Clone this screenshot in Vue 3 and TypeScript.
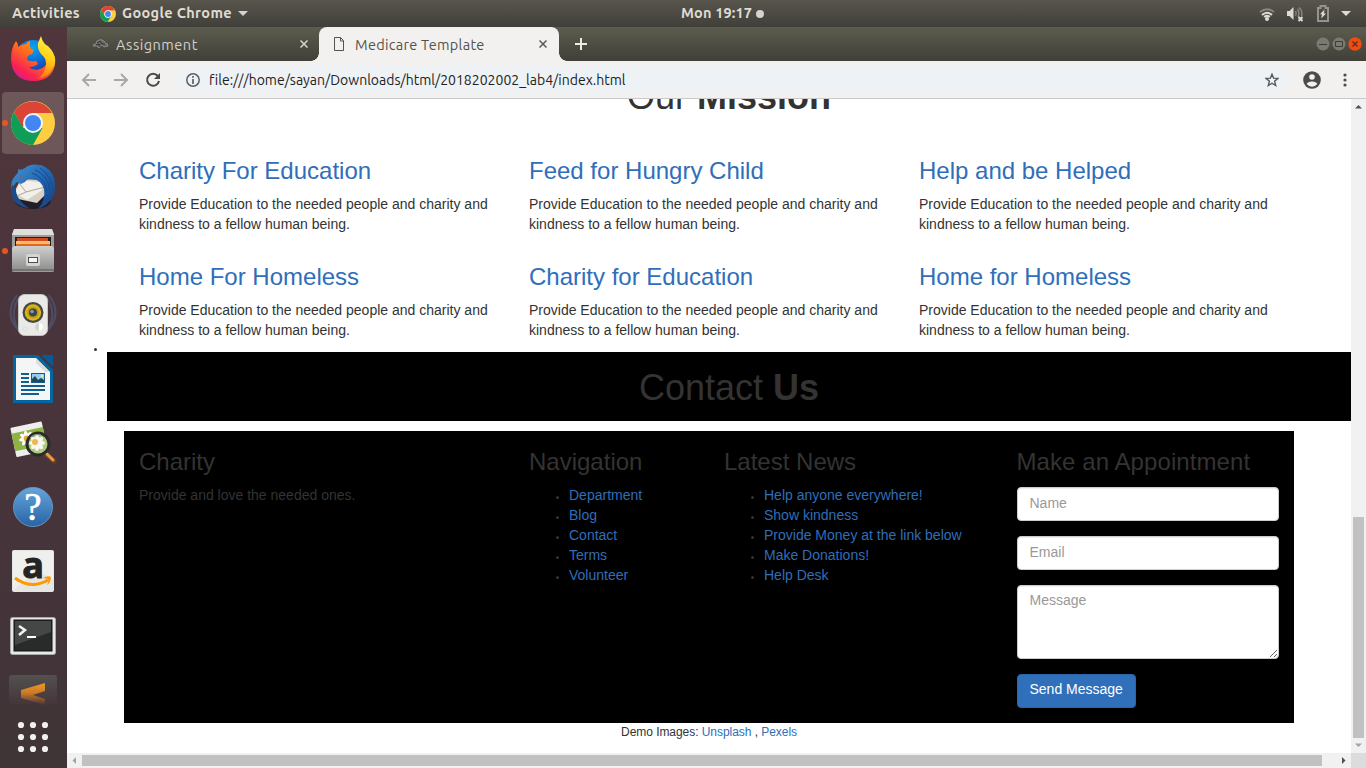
<script setup lang="ts">
interface Mission { title: string }
const missions: Mission[] = [
  { title: 'Charity For Education' },
  { title: 'Feed for Hungry Child' },
  { title: 'Help and be Helped' },
  { title: 'Home For Homeless' },
  { title: 'Charity for Education' },
  { title: 'Home for Homeless' },
]
const navigation: string[] = ['Department', 'Blog', 'Contact', 'Terms', 'Volunteer']
const news: string[] = [
  'Help anyone everywhere!',
  'Show kindness',
  'Provide Money at the link below',
  'Make Donations!',
  'Help Desk',
]
const dots: number[] = [5, 17, 29]
</script>

<template>
  <div class="desktop">
    <header class="topbar">
      <span class="activities">Activities</span>
      <svg class="mini-chrome" width="16" height="16" viewBox="0 0 44 44">
        <circle cx="22" cy="22" r="22" fill="#fc4" />
        <path d="M3 11A22 22 0 0 1 41 11.5L22 12.5A10 10 0 0 0 13.5 27Z" fill="#db4437" />
        <path d="M3 11A22 22 0 0 0 21 44L31 27L22 32A10 10 0 0 1 13 27Z" fill="#0f9d58" />
        <circle cx="22" cy="22" r="10" fill="#fff" /><circle cx="22" cy="22" r="8" fill="#4285f4" />
      </svg>
      <span class="appname">Google Chrome</span>
      <svg class="caret" width="10" height="5"><path d="M0 0H10L5 5Z" fill="#d5d3cf" /></svg>
      <span class="clock">Mon 19:17</span>
      <span class="notice"></span>
      <div class="tray">
        <svg width="16" height="16" viewBox="0 0 16 16" fill="none" stroke-width="2">
          <path d="M1 6Q8 .5 15 6" stroke="#888680" /><path d="M3 9Q8 4.5 13 9" stroke="#dfdbd2" />
          <path d="M5.2 11Q8 8.7 10.8 11" stroke="#dfdbd2" /><circle cx="8" cy="13" r="2" fill="#dfdbd2" />
        </svg>
        <svg class="volume" width="18" height="16" viewBox="0 0 18 16">
          <path d="M1 5H3.5L7.5 1V14L3.5 10H1Z" fill="#dfdbd2" />
          <path d="M9.5 5Q11 7.5 9.5 10M11.5 3Q14 7 12 11M13 1.5Q17 5 15.5 10" fill="none" stroke="#888680" stroke-width="1.5" />
          <path d="M12.5 11L16.5 15M16.5 11L12.5 15" stroke="#dfdbd2" stroke-width="2" />
        </svg>
        <svg class="battery" width="12" height="17" viewBox="0 0 12 17">
          <path d="M3.5 1H8.5V3H11V16H1V3H3.5Z" fill="none" stroke="#95938c" stroke-width="2" />
          <path d="M7.5 4.5L3 9.3H5L4.2 13.5L9 8.5H7Z" fill="#dfdbd2" />
        </svg>
        <svg width="10" height="5"><path d="M0 0H10L5 5Z" fill="#dfdbd2" /></svg>
      </div>
    </header>

    <div class="work">
      <aside class="dock">
        <div class="tile">
          <svg width="48" height="48" viewBox="0 0 48 48">
            <defs>
              <radialGradient id="fxBlue" cx=".5" cy=".2" r=".8"><stop offset="0" stop-color="#08a6ef" /><stop offset=".6" stop-color="#1458c8" /><stop offset="1" stop-color="#321a78" /></radialGradient>
              <linearGradient id="fxRed" x1=".8" y1="0" x2=".1" y2=".9"><stop offset="0" stop-color="#ffad12" /><stop offset=".45" stop-color="#ff6920" /><stop offset=".8" stop-color="#f92253" /><stop offset="1" stop-color="#e01595" /></linearGradient>
              <linearGradient id="fxYellow" x1=".6" y1="0" x2=".4" y2="1"><stop offset="0" stop-color="#fff34d" /><stop offset=".5" stop-color="#ffd017" /><stop offset="1" stop-color="#ff7418" /></linearGradient>
            </defs>
            <circle cx="24" cy="24" r="19" fill="url(#fxBlue)" />
            <path d="M7 6Q9 8 9 12Q13 9 17 9Q19 6 21 6Q20 10 22 14L25 15L23 19Q18 20 18 24Q19 27 27 26L29 29Q24 33 19 32Q28 38 36 31Q43 23 38 13Q48 20 46 30Q42 46 25 46Q3 46 2 24Q2 13 7 6Z" fill="url(#fxRed)" />
            <path d="M32 1Q34 9 39 11Q49 21 45 31Q40 42 29 44Q37 37 37 29Q37 23 33 20Q28 15 29 8Z" fill="url(#fxYellow)" />
          </svg>
        </div>
        <div class="tile active running">
          <svg width="48" height="48" viewBox="0 0 48 48">
            <circle cx="24" cy="24" r="22" fill="#ffcd42" />
            <path d="M5 13A22 22 0 0 1 43 14H24L13.5 28Z" fill="#db4437" />
            <path d="M5 13A22 22 0 0 0 24 46L33.5 29H24L14.5 29Z" fill="#0f9d58" />
            <circle cx="24" cy="24" r="10" fill="#f5f5f5" /><circle cx="24" cy="24" r="8" fill="#4285f4" />
          </svg>
        </div>
        <div class="tile">
          <svg width="48" height="48" viewBox="0 0 48 48">
            <defs><linearGradient id="bird" x1="0" y1="0" x2="1" y2="1"><stop offset="0" stop-color="#4594d0" /><stop offset=".5" stop-color="#2267b2" /><stop offset="1" stop-color="#143b7d" /></linearGradient></defs>
            <ellipse cx="24" cy="38" rx="18" ry="8" fill="#211d2a" />
            <path d="M4 31L12 16L36 17L37 31L28 40L9 36Z" fill="#d6d0c7" />
            <path d="M6 30L12 17L36 20L32 28L18 37Z" fill="#f3f0ea" /><path d="M10 20L17 29L36 24M17 29L8 33" fill="none" stroke="#aaa69f" />
            <path d="M9 6Q12 8 16 5Q21 0 31 2Q34 2 36 4Q46 9 46 22Q47 39 29 46Q37 37 35 26Q32 17 24 16Q19 15 16 19L12 21L8 19Q4 22 3 29Q0 18 7 12Q10 9 9 6Z" fill="url(#bird)" />
            <path d="M3 22Q0 36 10 42Q14 45 20 45Q6 36 7 25Z" fill="#1d4c88" />
            <path d="M23 10Q35 14 38 28M26 7Q38 11 41 27M31 5Q42 12 44 28M38 32Q37 38 34 42" fill="none" stroke="#174c91" />
            <circle cx="12" cy="13" r="1" fill="#c44732" />
          </svg>
        </div>
        <div class="tile running">
          <svg width="48" height="48" viewBox="0 0 48 48">
            <defs><linearGradient id="metal" x2="0" y2="1"><stop stop-color="#cfcfcd" /><stop offset="1" stop-color="#929292" /></linearGradient></defs>
            <path d="M5 2H43L45 7V44Q45 45 43 45H5Q3 45 3 44V7Z" fill="#9c9c99" /><path d="M5 2H43L45 8H3Z" fill="#dededc" />
            <path d="M6 10H42V19H6Z" fill="#241e1b" /><path d="M8 11H39V14H8Z" fill="#d4491f" /><path d="M7 14H41V17H7Z" fill="#ffba67" /><path d="M7 17H41V19H7Z" fill="#df6720" />
            <path d="M5 19H43L45 21V42H3V21Z" fill="url(#metal)" /><path d="M3 42H45V44H3Z" fill="#757573" />
            <rect x="17" y="27" width="14" height="12" rx="2" fill="#d4d4d2" /><rect x="19.5" y="30.5" width="9" height="5" fill="#f7f7f5" stroke="#4f4f4e" />
          </svg>
        </div>
        <div class="tile">
          <svg width="48" height="48" viewBox="0 0 48 48">
            <path d="M8 4Q-5 22 8 38M11 5Q-1 22 10 40M40 4Q53 22 40 38M37 5Q49 22 38 40" fill="none" stroke="#505574" stroke-opacity=".75" stroke-width="2" />
            <rect x="9.5" y="3.5" width="29" height="41" rx="6" fill="#e9e9e7" stroke="#c3c3bf" />
            <circle cx="24" cy="21.5" r="10.5" fill="#474843" /><circle cx="24" cy="21.5" r="8.2" fill="#dbb718" /><circle cx="24" cy="21.5" r="6" fill="#c19c17" /><circle cx="24" cy="21.5" r="4" fill="#38474d" /><circle cx="23" cy="20.5" r="1.8" fill="#8a9ba5" />
            <circle cx="30" cy="36" r="4" fill="#d4d4d1" /><path d="M30 32A4 4 0 0 1 30 40Z" fill="#fff" /><circle cx="16" cy="38" r="2" fill="none" stroke="#ddd" />
          </svg>
        </div>
        <div class="tile">
          <svg width="48" height="48" viewBox="0 0 48 48">
            <path d="M4 0H29L44 15V48H4Z" fill="#0366a1" /><path d="M32 0H44V12Z" fill="#065b96" /><path d="M7 3H27L41 17V45H7Z" fill="#f4f5f5" /><path d="M27 3V8L36 17H41Z" fill="#ddd" />
            <path d="M12 19H20M12 23H20M12 27H20M12 31H36M12 35H36M12 39H30" stroke="#125e8f" stroke-width="2" /><rect x="22" y="18" width="14" height="10" fill="#155d8c" /><rect x="23" y="19" width="12" height="8" fill="#8dcff1" /><circle cx="33" cy="21" r="1.3" fill="#fff170" /><path d="M23 27V24L26 21L29 25L32 23L35 25V27Z" fill="#264655" />
          </svg>
        </div>
        <div class="tile">
          <svg width="48" height="48" viewBox="0 0 48 48">
            <g transform="rotate(-12 21 20)"><rect x="4" y="5" width="32" height="30" rx="1" fill="#eeeeec" /><rect x="4" y="11" width="32" height="18" fill="#8eb344" />
              <g fill="#fff"><ellipse cx="18" cy="19" rx="2.5" ry="8" /><ellipse cx="18" cy="19" rx="8" ry="2.5" /><ellipse cx="18" cy="19" rx="2.5" ry="8" transform="rotate(45 18 19)" /><ellipse cx="18" cy="19" rx="2.5" ry="8" transform="rotate(-45 18 19)" /></g>
              <circle cx="18" cy="19" r="3.2" fill="#eda62b" />
            </g>
            <path d="M37 35L45 42" stroke="#694026" stroke-width="5" stroke-linecap="round" /><path d="M38 35L44 41" stroke="#e79b45" stroke-width="3" stroke-linecap="round" />
            <circle cx="29" cy="25" r="11" fill="#b1c981" stroke="#292c29" stroke-width="3" />
            <g fill="#f7f7f1"><ellipse cx="28" cy="24" rx="3" ry="8" /><ellipse cx="28" cy="24" rx="8" ry="3" /><ellipse cx="28" cy="24" rx="3" ry="8" transform="rotate(45 28 24)" /><ellipse cx="28" cy="24" rx="3" ry="8" transform="rotate(-45 28 24)" /></g>
            <circle cx="26" cy="23" r="3" fill="#efb64b" /><path d="M21 19Q25 14 32 16" stroke="#8e998c" stroke-width="1" fill="none" />
          </svg>
        </div>
        <div class="tile">
          <svg width="48" height="48" viewBox="0 0 48 48"><defs><linearGradient id="help" x2="0" y2="1"><stop stop-color="#65a5dc" /><stop offset="1" stop-color="#2863a4" /></linearGradient></defs><circle cx="24" cy="24" r="19.5" fill="url(#help)" stroke="#6993bb" /><text x="24" y="36.5" text-anchor="middle" class="question">?</text></svg>
        </div>
        <div class="tile">
          <svg class="amazon" width="48" height="48" viewBox="0 0 48 48"><rect x="3" y="3" width="42" height="42" rx="2" fill="#e5e5e4" /><path d="M4 4H44V33Q30 18 4 44Z" fill="#f5f5f4" opacity=".6" /><text x="24" y="30.5" text-anchor="middle" class="letter">a</text><path d="M6 31Q22 43 39 33" fill="none" stroke="#ff9900" stroke-width="3" /><path d="M34 31Q39 28 42 30Q42 35 38 38Q40 34 39 32Z" fill="#ff9900" /></svg>
        </div>
        <div class="tile">
          <svg class="terminal" width="48" height="48" viewBox="0 0 48 48"><rect x="1.5" y="5.5" width="45" height="37" rx="2" fill="#e7e7e5" stroke="#aaa" /><rect x="5" y="8" width="38" height="31" fill="#292a2a" stroke="#111" /><path d="M6 9H42V20L6 33Z" fill="#454646" /><path d="M10 14L16 18L10 23" fill="none" stroke="#f3f3f3" stroke-width="2.5" /><path d="M18 25H27" stroke="#fff" stroke-width="2" /></svg>
        </div>
        <div class="cut-icon">
          <svg width="48" height="30" viewBox="0 0 48 30"><defs><linearGradient id="fade" x2="0" y2="1"><stop stop-color="#52514f" /><stop offset="1" stop-color="#44343a" /></linearGradient><linearGradient id="orange" gradientUnits="userSpaceOnUse" x1="0" y1="8" x2="0" y2="30"><stop stop-color="#f0981f" /><stop offset=".45" stop-color="#ca7928" /><stop offset="1" stop-color="#44343a" /></linearGradient></defs><path d="M0 30V3Q0 0 3 0H45Q48 0 48 3V30Z" fill="url(#fade)" /><path d="M12 15L36 8V16L24 20L36 24V30L12 23Z" fill="url(#orange)" /></svg>
        </div>
        <svg class="apps" width="34" height="34"><g v-for="y in dots" :key="y"><circle v-for="x in dots" :key="x" :cx="x" :cy="y" r="3.1" fill="#f2f0ef" /></g></svg>
      </aside>

      <section class="browser">
        <div class="tabstrip">
          <div class="tab inactive">
            <svg width="17" height="12" viewBox="0 0 17 12"><path d="M1 8Q1 6 4 6L5 3Q9 0 12 3L13 5Q16 5 16 8L12 9L10 7L7 10L5 8Z" fill="#686866" stroke="#96948e" stroke-width=".8" /><path d="M5 5L8 3L10 6L13 6M4 7L7 6L8 9" stroke="#343532" fill="none" /></svg>
            <span class="first-title">Assignment</span>
            <svg class="close" width="8" height="8"><path d="M.5 .5L7.5 7.5M7.5 .5L.5 7.5" stroke="#d6d4cf" stroke-width="1.5" /></svg>
          </div>
          <div class="tab current">
            <svg width="10" height="14"><path d="M.5 .5H6.5L9.5 3.5V13.5H.5ZM6.5 .5V4H9.5" fill="none" stroke="#55524e" /></svg>
            <span class="second-title">Medicare Template</span>
            <svg class="close" width="8" height="8"><path d="M.5 .5L7.5 7.5M7.5 .5L.5 7.5" stroke="#5c5955" stroke-width="1.5" /></svg>
          </div>
          <svg class="plus" width="12" height="12"><path d="M6 0V12M0 6H12" stroke="#eeeae4" stroke-width="2" /></svg>
          <div class="controls">
            <svg width="14" height="14"><circle cx="7" cy="7" r="6.5" fill="#7b7a72" /><path d="M3 7.5H11" stroke="#3d3d38" /></svg>
            <svg width="14" height="14"><circle cx="7" cy="7" r="6.5" fill="#7b7a72" /><path d="M3.5 4.5H10.5V9.5H3.5Z" fill="none" stroke="#3d3d38" /></svg>
            <svg width="14" height="14"><circle cx="7" cy="7" r="6.7" fill="#f04b13" /><path d="M4.5 4.5L9.5 9.5M9.5 4.5L4.5 9.5" stroke="#57301f" stroke-width="1.4" /></svg>
          </div>
        </div>
        <div class="toolbar">
          <svg class="nav-icon" width="16" height="16"><path d="M15 8H2M8 2L2 8L8 14" fill="none" stroke="#aaa8a6" stroke-width="2" /></svg>
          <svg class="nav-icon" width="16" height="16"><path d="M1 8H14M8 2L14 8L8 14" fill="none" stroke="#aaa8a6" stroke-width="2" /></svg>
          <svg class="nav-icon reload" width="16" height="16"><path d="M12.8 4A6 6 0 1 0 14 9" fill="none" stroke="#4b4a48" stroke-width="2" /><path d="M15 1V7H9Z" fill="#4b4a48" /></svg>
          <div class="address">
            <svg width="14" height="14"><circle cx="7" cy="7" r="6.2" fill="none" stroke="#5c6064" stroke-width="1.5" /><path d="M7 6V11M7 3V4.7" stroke="#5c6064" stroke-width="1.7" /></svg>
            <span class="url">file:///home/sayan/Downloads/html/2018202002_lab4/index.html</span>
            <svg class="star" width="14" height="14" viewBox="0 0 14 14"><path d="M7 1.2L8.6 5.1L12.9 5.4L9.6 8.2L10.7 12.5L7 10.2L3.3 12.5L4.4 8.2L1.1 5.4L5.4 5.1Z" fill="none" stroke="#555960" stroke-width="1.4" /></svg>
          </div>
          <svg class="profile" width="18" height="18"><circle cx="9" cy="9" r="8.8" fill="#4b4b4b" /><circle cx="9" cy="6" r="2.8" fill="#f2f1f0" /><path d="M3.7 13Q4.5 10.4 9 10.4Q13.5 10.4 14.3 13Q12 15.8 9 15.8Q6 15.8 3.7 13Z" fill="#f2f1f0" /></svg>
          <svg class="menu" width="4" height="14"><circle cx="2" cy="2" r="1.6" /><circle cx="2" cy="7" r="1.6" /><circle cx="2" cy="12" r="1.6" /></svg>
        </div>

        <div class="viewport">
          <main class="page">
            <h1 class="mission-title">Our <b>Mission</b></h1>
            <div class="missions">
              <article v-for="item in missions" :key="item.title">
                <h3>{{ item.title }}</h3>
                <p>Provide Education to the needed people and charity and<br>kindness to a fellow human being.</p>
              </article>
            </div>
            <div class="stray"></div>
            <h1 class="contact">Contact <b>Us</b></h1>
            <footer class="footer">
              <div><h3>Charity</h3><p>Provide and love the needed ones.</p></div>
              <div><h3>Navigation</h3><ul><li v-for="item in navigation" :key="item"><a>{{ item }}</a></li></ul></div>
              <div><h3>Latest News</h3><ul><li v-for="item in news" :key="item"><a>{{ item }}</a></li></ul></div>
              <form @submit.prevent><h3>Make an Appointment</h3><input placeholder="Name"><input placeholder="Email"><textarea placeholder="Message" rows="3"></textarea><button>Send Message</button></form>
            </footer>
            <div class="credits">Demo Images: <a>Unsplash</a> , <a>Pexels</a></div>
          </main>
          <div class="vbar">
            <svg width="15" height="15"><path d="M4 9.5H11L7.5 6Z" fill="#505050" /></svg><div class="vthumb"></div><svg class="down" width="15" height="15"><path d="M4 5.5H11L7.5 9Z" fill="#a3a3a3" /></svg>
          </div>
          <div class="hbar">
            <svg width="15" height="15"><path d="M9 4V11L5.5 7.5Z" fill="#a3a3a3" /></svg><div class="hthumb"></div><svg class="right" width="15" height="15"><path d="M6 4V11L9.5 7.5Z" fill="#505050" /></svg>
          </div>
          <div class="corner"></div>
        </div>
      </section>
    </div>
  </div>
</template>

<style>
html, body { margin: 0; overflow: hidden; }
</style>

<style scoped>
.desktop, .desktop * { box-sizing: border-box; }
.desktop { width: 1366px; height: 768px; overflow: hidden; display: flex; flex-direction: column; font-family: Ubuntu, "Noto Sans", sans-serif; }
svg { display: block; flex: none; }
.topbar { height: 27px; flex: none; display: flex; align-items: center; background: linear-gradient(#58554d, #413f39); color: #dfdbd2; font-size: 14.5px; font-weight: 700; white-space: nowrap; }
.topbar > span:not(.notice) { line-height: 20px; padding-bottom: 1px; }
.activities { width: 88px; padding-left: 12px; letter-spacing: .35px; }
.mini-chrome { margin-left: 12px; }
.appname { width: 112px; margin-left: 6px; letter-spacing: .35px; }
.caret { margin-left: 4px; }
.clock { width: 72px; margin-left: 433px; letter-spacing: .15px; }
.notice { width: 8px; height: 8px; margin-left: 3px; border-radius: 50%; background: #d5d3cf; }
.tray { margin-left: auto; padding-right: 15px; display: flex; align-items: center; }
.volume { margin-left: 11px; }
.battery { margin: 0 12px 0 13px; }
.work { height: 741px; display: flex; }
.dock { width: 67px; flex: none; display: flex; flex-direction: column; align-items: center; padding-top: 1px; background: linear-gradient(#50363b, #49343b 45%, #44343a 80%, #3f3436); }
.tile { width: 62px; height: 62px; margin: 0 3px 2px 2px; display: flex; align-items: center; justify-content: center; border-radius: 4px; position: relative; flex: none; }
.active { background: #6d5759; }
.running::before { content: ""; position: absolute; left: 0; top: 28px; width: 6px; height: 6px; border-radius: 50%; background: #e95420; }
.question { font: 39px "Liberation Serif", serif; fill: #fff; stroke: #fff; stroke-width: .6px; }
.letter { font: bold 36px "Open Sans", sans-serif; fill: #242424; stroke: #242424; stroke-width: 1px; }
.terminal { margin-top: 2px; }
.cut-icon { margin: 7px 1px 15px 0; }
.apps { margin-right: 1px; flex: none; }
.browser { width: 1299px; min-width: 0; display: flex; flex-direction: column; }
.tabstrip { height: 34px; flex: none; display: flex; background: linear-gradient(#5c5c4e, #403f39); }
.tab { display: flex; align-items: center; font-size: 14.5px; letter-spacing: .28px; white-space: nowrap; }
.inactive { width: 252px; padding: 0 11px 0 25px; color: #d2cfc8; }
.inactive span { margin-left: 7px; letter-spacing: .5px; }
.close { margin-left: auto; }
.current { position: relative; width: 240px; padding: 0 12px 0 15px; background: #f2f1f0; border-radius: 8px 8px 0 0; color: #54514d; }
.current::before, .current::after { content: ""; position: absolute; bottom: 0; width: 8px; height: 8px; }
.current::before { left: -8px; background: radial-gradient(circle at 0 0, transparent 7.5px, #f2f1f0 8px); }
.current::after { right: -8px; background: radial-gradient(circle at 8px 0, transparent 7.5px, #f2f1f0 8px); }
.current span { margin-left: 11px; }
.plus { margin: 11px 0 0 16px; }
.controls { display: flex; gap: 2px; margin: 10px 4px 0 auto; }
.toolbar { height: 38px; flex: none; display: flex; align-items: center; background: #f2f1f0; border-bottom: 1px solid #c9c9c9; padding-left: 14px; }
.nav-icon { margin-right: 16px; }
.reload { margin-right: 14px; }
.address { width: 1114px; height: 28px; display: flex; align-items: center; border-radius: 14px; background: #eff2f4; padding: 0 10px 0 11px; }
.url { margin-left: 9px; font-size: 14px; color: #202124; letter-spacing: .01px; white-space: nowrap; }
.star { margin-left: auto; }
.profile { margin-left: 14px; }
.menu { margin-left: 22px; fill: #4b4b4b; }
.viewport { height: 669px; display: grid; grid-template: 654px 15px / 1284px 15px; background: #fff; }
.page { overflow: hidden; color: #333; font: 14px/20px "Liberation Sans", Arial, sans-serif; }
h1 { font-size: 36px; line-height: 40px; font-weight: 400; text-align: center; margin: 0; }
.mission-title { margin: -22px 0 41px 40px; }
h3 { font-size: 24px; line-height: 26px; font-weight: 400; margin: 0 0 10px; }
p { margin: 0; white-space: nowrap; }
.missions { margin-left: 57px; width: 1170px; display: grid; grid-template-columns: repeat(3, 390px); row-gap: 30px; }
.missions article { padding: 0 15px; }
.missions h3, a { color: #2f6eba; }
.stray { width: 3px; height: 3px; border-radius: 50%; background: #333; margin: 8px 0 1px 27px; }
.contact { margin-left: 40px; height: 69px; background: #000; padding-top: 16px; }
.footer { margin: 10px 0 0 57px; width: 1170px; height: 292px; background: #000; display: grid; grid-template-columns: 390px 195px 292.5px 292.5px; }
.footer > * { padding: 18px 15px 0; }
.footer h3 { white-space: nowrap; }
ul { margin: 0; padding-left: 40px; white-space: nowrap; list-style: none; }
li { display: flex; }
li::before { content: ""; width: 3px; height: 3px; border-radius: 50%; background: #333; margin: 11px 10px 0 -13px; }
form { margin: 0; }
form h3 { margin-bottom: 12px; letter-spacing: .08px; }
input, textarea { display: block; width: 100%; height: 34px; padding: 5px 12px 7px; margin: 0 0 15px; border: 1px solid #ccc; border-radius: 4px; font: 14px/20px "Liberation Sans", Arial, sans-serif; box-shadow: inset 0 1px 1px rgba(0,0,0,.075); background: #fff; }
textarea { height: 74px; padding-top: 4px; }
input::placeholder, textarea::placeholder { color: #999; }
button { height: 34px; padding: 4px 12px 8px; font: 14px/20px "Liberation Sans", Arial, sans-serif; color: #fff; background: #306fba; border: 1px solid #2a64a9; border-radius: 4px; }
.credits { font-size: 12px; line-height: 17px; margin-left: 57px; padding-top: 1px; width: 1170px; text-align: center; letter-spacing: -.05px; }
.vbar { background: #f1f1f1; display: flex; flex-direction: column; }
.vthumb { width: 11px; height: 221px; margin: 403px 0 0 2px; background: #c1c1c1; }
.down { margin-top: auto; }
.hbar { background: #f1f1f1; display: flex; align-items: center; }
.hthumb { width: 1240px; height: 11px; background: #c1c1c1; }
.right { margin-left: auto; }
.corner { background: #dcdcdc; }
</style>
